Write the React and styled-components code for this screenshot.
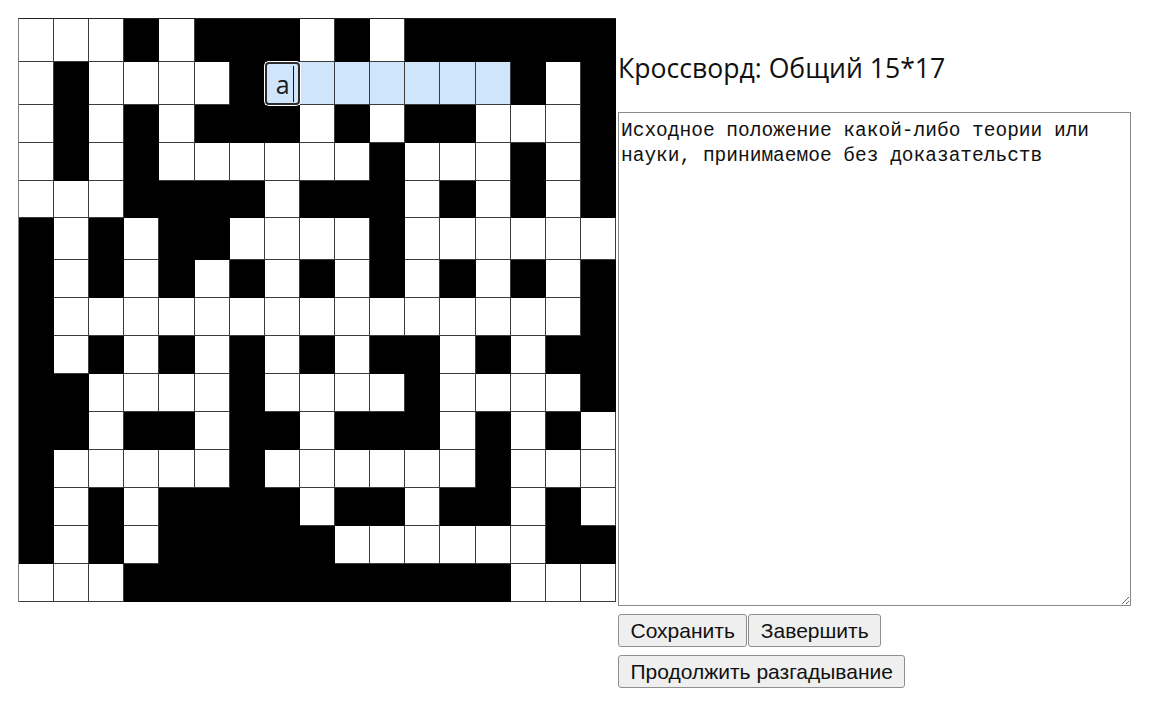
import styled, { createGlobalStyle } from 'styled-components';

const GlobalStyle = createGlobalStyle`
  body {
    margin: 0;
    background: #fff;
    font-family: "Open Sans", "Noto Sans", sans-serif;
  }
`;

// W - white, B - black, H - highlighted word, I - active input
const GRID = [
  'WWWBWBBBWBWBBBBBB',
  'WBWWWWBIHHHHHHBWB',
  'WBWBWBBBWBWBBWWWB',
  'WBWBWWWWWWBWWWBWB',
  'WWWBBBBWBBBWBWBWB',
  'BWBWBBWWWWBWWWWWW',
  'BWBWBWBWBWBWBWBWB',
  'BWWWWWWWWWWWWWWWB',
  'BWBWBWBWBWBBWBWBB',
  'BBWWWWBWWWWBWWWWB',
  'BBWBBWBBWBBBWBWBW',
  'BWWWWWBWWWWWWBWWW',
  'BWBWBBBBWBBWBBWBW',
  'BWBWBBBBBWWWWWWBB',
  'WWWBBBBBBBBBBBWWW',
];

function App() {
  return (
    <>
      <GlobalStyle />
      <Page>
        <Board>
          {GRID.map((row, r) =>
            row.split('').map((kind, c) =>
              kind === 'I' ? (
                <InputCell key={`${r}-${c}`}>
                  а<Caret />
                </InputCell>
              ) : (
                <Cell key={`${r}-${c}`} $kind={kind} />
              )
            )
          )}
        </Board>
        <Side>
          <Title>Кроссворд: Общий 15*17</Title>
          <Question
            readOnly
            defaultValue="Исходное положение какой-либо теории или науки, принимаемое без доказательств"
          />
          <Buttons>
            <Button>Сохранить</Button>
            <Button>Завершить</Button>
          </Buttons>
          <Buttons>
            <Button>Продолжить разгадывание</Button>
          </Buttons>
        </Side>
      </Page>
    </>
  );
}

const Page = styled.div`
  display: flex;
  align-items: flex-start;
  gap: 2px;
  padding: 18px 0 0 18px;
`;

const Board = styled.div`
  display: grid;
  width: 598px;
  grid-template-columns: repeat(17, 1fr);
  grid-template-rows: 43px 43px 38px 38px 37px 42px 38px 38px 38px 38px 38px 38px 38px 38px 38px;
  border-top: 1px solid #222;
  border-left: 1px solid #808080;
  box-sizing: border-box;
`;

const cellColors = {
  W: '#ffffff',
  B: '#000000',
  H: '#cfe5fc',
};

const Cell = styled.div`
  background: ${(p) => cellColors[p.$kind]};
  border-right: 1px solid ${(p) => (p.$kind === 'B' ? '#000' : '#3c3c3c')};
  border-bottom: 1px solid ${(p) => (p.$kind === 'B' ? '#000' : '#3c3c3c')};
`;

const InputCell = styled.div`
  z-index: 1;
  display: flex;
  align-items: center;
  padding-left: 9px;
  background: #cfe5fc;
  border: 2px solid #2b2b2b;
  border-radius: 4px;
  box-shadow: 0 0 0 1px #fff;
  font-family: "Open Sans", sans-serif;
  font-size: 25px;
  color: #1a1a1a;
  box-sizing: border-box;
`;

const Caret = styled.span`
  display: inline-block;
  width: 1px;
  height: 36px;
  margin-left: 3px;
  background: #111;
`;

const Side = styled.div`
  display: flex;
  flex-direction: column;
  align-items: flex-start;
`;

const Title = styled.h1`
  margin: 33px 0 0;
  font-size: 26.6px;
  font-weight: 400;
  line-height: 34px;
  color: #111;
`;

const Question = styled.textarea`
  margin-top: 27px;
  width: 513px;
  height: 494px;
  box-sizing: border-box;
  padding: 6px 2px;
  border: 1px solid #8a8a8a;
  font-family: "Liberation Mono", "DejaVu Sans Mono", monospace;
  font-size: 19.5px;
  line-height: 25px;
  color: #111;
  resize: both;
  outline: none;
`;

const Buttons = styled.div`
  display: flex;
  gap: 1px;
  margin-top: 8px;
`;

const Button = styled.button`
  height: 33px;
  padding: 0 11.5px;
  background: #efefef;
  border: 1px solid #8f8f8f;
  border-radius: 3px;
  font-family: "Liberation Sans", Arial, sans-serif;
  font-size: 21px;
  color: #111;
`;

export default App;
